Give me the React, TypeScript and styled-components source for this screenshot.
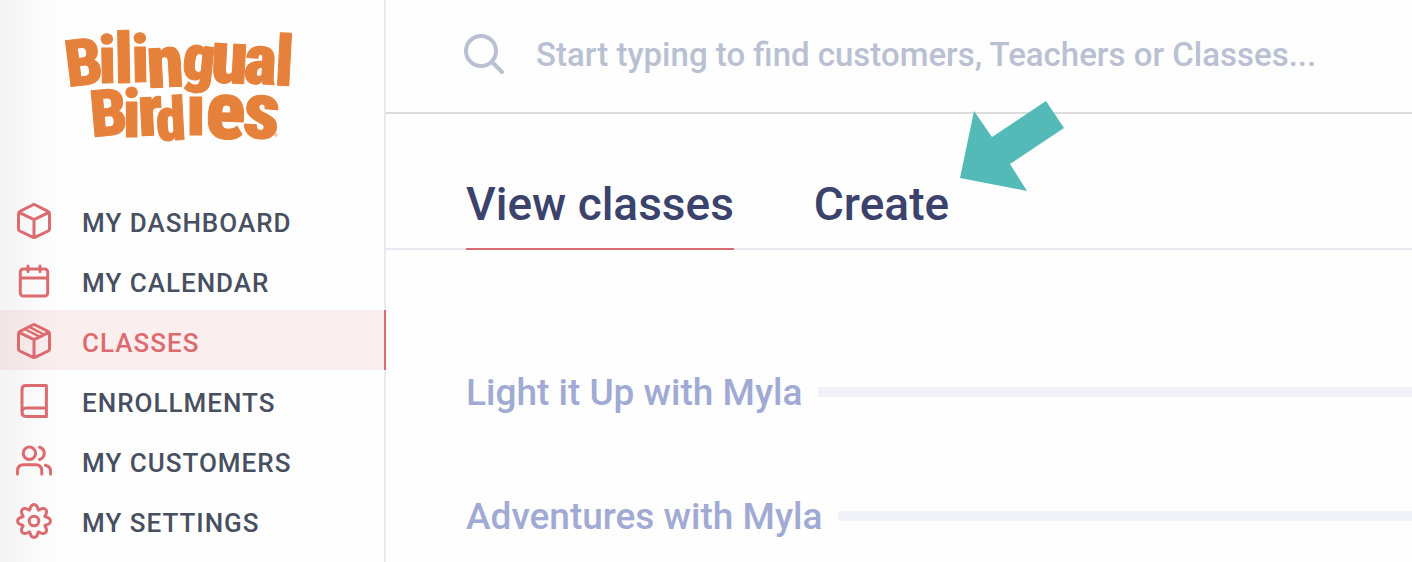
import React from 'react';
import styled, { createGlobalStyle } from 'styled-components';

const GlobalStyle = createGlobalStyle`
  * { box-sizing: border-box; }
  body { margin: 0; background: #fefefe; font-family: Roboto, "Liberation Sans", sans-serif; font-weight: 500; }
`;

const Page = styled.div`
  display: flex;
  min-height: 100vh;
  overflow: hidden;
`;

const Sidebar = styled.aside`
  flex: 0 0 386px;
  border-right: 2px solid #e8e8ee;
  background: linear-gradient(to right, #f3f3f3, #fcfcfc 48px, #fefefe 64px);
`;

const Brand = styled.a`
  display: block;
  height: 190px;
  padding: 10px 0 0 56px;
`;

const LogoText = styled.text`
  font-family: "Roboto Condensed", Roboto, sans-serif;
  font-weight: 900;
  fill: #e5813b;
  stroke: #e5813b;
  stroke-width: 1;
  stroke-linejoin: round;
`;

const NavList = styled.ul`
  list-style: none;
  margin: 0 -2px 0 0;
  padding: 0;
`;

const NavLink = styled.a<{ $active?: boolean }>`
  display: flex;
  align-items: center;
  gap: 30px;
  height: 60px;
  padding: 2px 0 0 16px;
  border-right: 2px solid ${(p) => (p.$active ? '#dc6b70' : 'transparent')};
  background: ${(p) => (p.$active ? 'rgba(220, 107, 112, 0.11)' : 'transparent')};
  color: ${(p) => (p.$active ? '#dc6b70' : '#474f61')};
  font-size: 26px;
  line-height: 32px;
  letter-spacing: 1px;
  text-decoration: none;
`;

const NavLabel = styled.span`
  padding-top: 4px;
`;

const NavIcon = styled.svg`
  flex: none;
  width: 36px;
  height: 36px;
  fill: none;
  stroke: #dc6b70;
  stroke-width: 3;
  stroke-linecap: round;
  stroke-linejoin: round;
`;

const Main = styled.main`
  flex: 1;
  min-width: 0;
`;

const SearchBar = styled.label`
  display: flex;
  align-items: center;
  gap: 32px;
  height: 114px;
  padding: 0 78px 4px;
  border-bottom: 2px solid #dcdcdc;
`;

const SearchIcon = styled.svg`
  flex: none;
  width: 40px;
  height: 40px;
  fill: none;
  stroke: #b9c0d2;
  stroke-width: 4;
  stroke-linecap: round;
`;

const SearchInput = styled.input`
  flex: 1;
  min-width: 0;
  padding: 2px 0 0;
  border: 0;
  outline: 0;
  background: transparent;
  color: #3b426b;
  font: 500 33px/44px Roboto, "Liberation Sans", sans-serif;
  &::placeholder { color: #b9c0d2; opacity: 1; }
`;

const Tabs = styled.nav`
  display: flex;
  gap: 80px;
  height: 136px;
  padding: 0 80px;
  border-bottom: 2px solid #e8e8ee;
`;

const Tab = styled.a<{ $active?: boolean }>`
  position: relative;
  height: 136px;
  padding-top: 60px;
  border-bottom: 2px solid ${(p) => (p.$active ? '#dc6b70' : 'transparent')};
  color: #3b426b;
  font-size: 46px;
  line-height: 60px;
  white-space: nowrap;
  text-decoration: none;
`;

const Pointer = styled.svg`
  position: absolute;
  left: 146px;
  top: -14px;
  width: 104px;
  height: 92px;
  fill: #54bab8;
  pointer-events: none;
`;

const Groups = styled.div`
  display: flex;
  flex-direction: column;
  gap: 74px;
  padding: 117px 0 0 80px;
`;

const GroupTitle = styled.h2`
  display: flex;
  align-items: center;
  gap: 16px;
  margin: 0;
  color: #a0aad4;
  font-size: 37px;
  font-weight: 500;
  line-height: 48px;
  white-space: nowrap;
  &::after {
    content: "";
    flex: 1;
    height: 10px;
    background: #f1f2f9;
  }
`;

const GroupName = styled.span`
  padding-top: 2px;
`;

const boxOutline =
  'M16.6 2 4 8.3Q2.5 9 2.5 11V26Q2.5 27.3 3.8 28L16.6 34.2Q18 35 19.4 34.2L32.2 28Q33.5 27.3 33.5 26V11Q33.5 9 32 8.3L19.4 2Q18 1.2 16.6 2ZM3 9.3 18 16.6 33 9.3M18 16.6V34.4';

const gear = (() => {
  const points: string[] = [];
  for (let i = 0; i <= 160; i += 1) {
    const a = (i / 160) * Math.PI * 2;
    const r = 14.1 + 2.3 * Math.cos(8 * a);
    const t = a + 0.05 * Math.sin(8 * a);
    points.push(`${(18 + r * Math.sin(t)).toFixed(2)} ${(18 - r * Math.cos(t)).toFixed(2)}`);
  }
  return `M${points.join('L')}Z`;
})();

const items = [
  { label: 'MY DASHBOARD', icon: <path d={boxOutline} /> },
  {
    label: 'MY CALENDAR',
    icon: (
      <>
        <rect x="4.3" y="6" width="27.4" height="27" rx="3" />
        <path d="M4.3 15H31.7M12 3V8.5M24 3V8.5" />
      </>
    ),
  },
  {
    label: 'CLASSES',
    active: true,
    icon: (
      <>
        <path d={boxOutline} />
        <path d="M9 6.3 23.6 13.6M13.6 4.1 27.6 11.2" strokeWidth="2.4" />
      </>
    ),
  },
  {
    label: 'ENROLLMENTS',
    icon: <path d="M6 29.5V6.5Q6 2.6 10 2.6H30.4V33.4H10Q6 33.4 6 29.5 6 25 10 25H30.4" />,
  },
  {
    label: 'MY CUSTOMERS',
    icon: (
      <path d="M19.6 10.3a6.2 6.2 0 1 1-12.4 0 6.2 6.2 0 0 1 12.4 0ZM23.6 4.2a6.4 6.4 0 0 1 0 12.3M1.5 31V28Q1.5 21.8 7.7 21.8H19.7Q25.8 21.8 25.8 28V31M29.5 22.2Q34.6 23.5 34.6 28.4V31" />
    ),
  },
  {
    label: 'MY SETTINGS',
    icon: (
      <>
        <path d={gear} />
        <circle cx="18" cy="18" r="4.8" />
      </>
    ),
  },
];

const Logo = () => (
  <svg width="250" height="160" viewBox="56 10 250 160" role="img" aria-label="Bilingual Birdies">
    <LogoText>
      <tspan x="68" y="87" rotate="-7" fontSize="65">B</tspan>
      <tspan x="99" y="83" rotate="-1" fontSize="66">i</tspan>
      <tspan x="115" y="83" rotate="-1" fontSize="70">l</tspan>
      <tspan x="132" y="82" rotate="-1" fontSize="66">i</tspan>
      <tspan x="148" y="88" rotate="-3" fontSize="74">n</tspan>
      <tspan x="181" y="78" rotate="6" fontSize="64">g</tspan>
      <tspan x="210" y="82" rotate="3" fontSize="74">u</tspan>
      <tspan x="243" y="83" rotate="3" fontSize="70">a</tspan>
      <tspan x="274" y="85" rotate="3" fontSize="70">l</tspan>
    </LogoText>
    <LogoText>
      <tspan x="92" y="137" rotate="-5" fontSize="65">B</tspan>
      <tspan x="123" y="137" fontSize="66">i</tspan>
      <tspan x="139" y="136" rotate="-3" fontSize="72">r</tspan>
      <tspan x="157" y="141" rotate="-3" fontSize="60">d</tspan>
      <tspan x="186" y="135" fontSize="72">ı</tspan>
      <tspan x="205" y="138" rotate="2" fontSize="82">e</tspan>
      <tspan x="242" y="137" rotate="4" fontSize="80">s</tspan>
    </LogoText>
    <circle cx="276" cy="135" r="1.8" fill="#f3c29d" />
  </svg>
);

export default function App() {
  return (
    <>
      <GlobalStyle />
      <Page>
        <Sidebar>
          <Brand href="#home">
            <Logo />
          </Brand>
          <NavList>
            {items.map((item) => (
              <li key={item.label}>
                <NavLink href="#section" $active={item.active} aria-current={item.active ? 'page' : undefined}>
                  <NavIcon viewBox="0 0 36 36" aria-hidden="true">{item.icon}</NavIcon>
                  <NavLabel>{item.label}</NavLabel>
                </NavLink>
              </li>
            ))}
          </NavList>
        </Sidebar>
        <Main>
          <SearchBar>
            <SearchIcon viewBox="0 0 40 40" aria-hidden="true">
              <circle cx="17" cy="17" r="15" />
              <path d="M28 28 38 38" />
            </SearchIcon>
            <SearchInput
              type="text"
              aria-label="Search"
              placeholder="Start typing to find customers, Teachers or Classes..."
            />
          </SearchBar>
          <Tabs>
            <Tab href="#view" $active>View classes</Tab>
            <Tab href="#create">
              Create
              <Pointer viewBox="960 100 104 92" aria-hidden="true">
                <path d="M960 178 974 111 992 137 1046 101 1064 128 1010 164 1027 191Z" />
              </Pointer>
            </Tab>
          </Tabs>
          <Groups>
            <GroupTitle><GroupName>Light it Up with Myla</GroupName></GroupTitle>
            <GroupTitle><GroupName>Adventures with Myla</GroupName></GroupTitle>
          </Groups>
        </Main>
      </Page>
    </>
  );
}
